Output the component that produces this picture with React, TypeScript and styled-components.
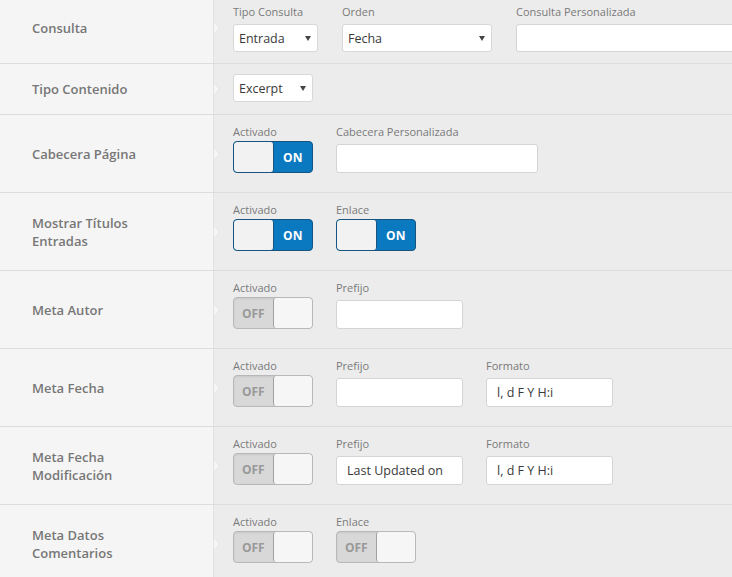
import styled, { createGlobalStyle, css } from 'styled-components';

const GlobalStyle = createGlobalStyle`
  html, body {
    margin: 0;
    padding: 0;
    background: #ececec;
    overflow: hidden;
  }
  * {
    box-sizing: border-box;
  }
`;

const StyledPage = styled.div`
  width: 732px;
  font-family: 'Open Sans', 'Liberation Sans', sans-serif;
  overflow: hidden;
`;

const StyledRow = styled.div<{ $height: number }>`
  display: flex;
  height: ${(p) => p.$height}px;
  border-bottom: 1px solid #dcdcdc;
`;

const StyledTitleCell = styled.div<{ $shift: number }>`
  position: relative;
  flex: 0 0 214px;
  display: flex;
  align-items: center;
  padding: 0 0 ${(p) => p.$shift}px 32px;
  background: #f5f5f5;
  border-right: 1px solid #e2e2e2;

  &::before {
    content: '';
    position: absolute;
    right: -7px;
    top: calc(50% - ${(p) => p.$shift / 2}px);
    margin-top: -7px;
    border-left: 6px solid #e4e4e4;
    border-top: 7px solid transparent;
    border-bottom: 7px solid transparent;
    z-index: 1;
  }

  &::after {
    content: '';
    position: absolute;
    right: -6px;
    top: calc(50% - ${(p) => p.$shift / 2}px);
    margin-top: -6px;
    border-left: 5px solid #f5f5f5;
    border-top: 6px solid transparent;
    border-bottom: 6px solid transparent;
    z-index: 2;
  }
`;

const StyledTitle = styled.div`
  width: 132px;
  font-size: 13px;
  font-weight: 600;
  line-height: 18px;
  color: #777;
`;

const StyledContent = styled.div<{ $top: number; $gap: number }>`
  flex: 1;
  display: flex;
  align-items: flex-start;
  gap: ${(p) => p.$gap}px;
  padding: ${(p) => p.$top}px 0 0 19px;
  background: #ececec;
  overflow: hidden;
  white-space: nowrap;
`;

const StyledField = styled.div`
  display: flex;
  flex-direction: column;
`;

const StyledLabel = styled.div`
  font-size: 11px;
  line-height: 15px;
  color: #7a7a7a;
  margin-bottom: 2px;
`;

const StyledSelect = styled.div<{ $width: number; $offset?: number }>`
  position: relative;
  width: ${(p) => p.$width}px;
  height: 28px;
  margin-top: ${(p) => p.$offset ?? 0}px;
  padding: 0 0 0 5px;
  display: flex;
  align-items: center;
  background: #fff;
  border: 1px solid #d8d8d8;
  border-radius: 3px;
  font-size: 12.5px;
  color: #3a3a3a;

  &::after {
    content: '';
    position: absolute;
    right: 6px;
    top: 11px;
    border-top: 5px solid #444;
    border-left: 3px solid transparent;
    border-right: 3px solid transparent;
  }
`;

const StyledInput = styled.input<{ $width: number; $height?: number }>`
  width: ${(p) => p.$width}px;
  height: ${(p) => p.$height ?? 29}px;
  margin: 3px 0 0;
  padding: 0 10px;
  background: #fff;
  border: 1px solid #d4d4d4;
  border-radius: 3px;
  font-family: 'Open Sans', 'Liberation Sans', sans-serif;
  font-size: 12.5px;
  color: #3a3a3a;
  outline: none;
`;

const StyledToggle = styled.div<{ $on: boolean }>`
  position: relative;
  display: flex;
  width: 80px;
  height: 32px;
  border-radius: 4px;
  overflow: hidden;
  font-size: 12px;
  font-weight: 700;
  ${(p) =>
    p.$on
      ? css`
          border: 1px solid #17547f;
          background: #0b79bf;
          color: #fff;
        `
      : css`
          border: 1px solid #b8b8b8;
          background: #d8d8d8;
          color: #999;
          box-shadow: inset 0 1px 2px rgba(0, 0, 0, 0.08);
        `}
`;

const StyledKnob = styled.div<{ $on: boolean }>`
  width: 40px;
  height: 100%;
  background: #f2f2f2;
  border-radius: 3px;
  ${(p) =>
    p.$on
      ? css`
          border-right: 1px solid #17547f;
        `
      : css`
          border-left: 1px solid #a0a0a0;
          background: #f6f6f6;
        `}
`;

const StyledToggleText = styled.div`
  width: 39px;
  display: flex;
  align-items: center;
  justify-content: center;
`;

const Toggle = ({ on }: { on: boolean }) => (
  <StyledToggle $on={on}>
    {on ? (
      <>
        <StyledKnob $on />
        <StyledToggleText>ON</StyledToggleText>
      </>
    ) : (
      <>
        <StyledToggleText>OFF</StyledToggleText>
        <StyledKnob $on={false} />
      </>
    )}
  </StyledToggle>
);

const Row = ({
  title,
  height,
  top,
  gap = 23,
  shift = 0,
  children,
}: {
  title: string;
  height: number;
  top: number;
  gap?: number;
  shift?: number;
  children: React.ReactNode;
}) => (
  <StyledRow $height={height}>
    <StyledTitleCell $shift={shift}>
      <StyledTitle>{title}</StyledTitle>
    </StyledTitleCell>
    <StyledContent $top={top} $gap={gap}>
      {children}
    </StyledContent>
  </StyledRow>
);

const ToggleField = ({ label, on }: { label: string; on: boolean }) => (
  <StyledField>
    <StyledLabel>{label}</StyledLabel>
    <Toggle on={on} />
  </StyledField>
);

const InputField = ({ label, value = '', width = 127 }: { label: string; value?: string; width?: number }) => (
  <StyledField>
    <StyledLabel>{label}</StyledLabel>
    <StyledInput $width={width} value={value} readOnly />
  </StyledField>
);

export default function App() {
  return (
    <>
      <GlobalStyle />
      <StyledPage>
        <Row title="Consulta" height={64} top={4} gap={24} shift={7}>
          <StyledField>
            <StyledLabel>Tipo Consulta</StyledLabel>
            <StyledSelect $width={85} $offset={3}>
              Entrada
            </StyledSelect>
          </StyledField>
          <StyledField>
            <StyledLabel>Orden</StyledLabel>
            <StyledSelect $width={150} $offset={3}>
              Fecha
            </StyledSelect>
          </StyledField>
          <StyledField>
            <StyledLabel>Consulta Personalizada</StyledLabel>
            <StyledInput $width={260} $height={28} value="" readOnly />
          </StyledField>
        </Row>

        <Row title="Tipo Contenido" height={51} top={10}>
          <StyledSelect $width={80}>Excerpt</StyledSelect>
        </Row>

        <Row title="Cabecera Página" height={78} top={9}>
          <ToggleField label="Activado" on />
          <InputField label="Cabecera Personalizada" width={202} />
        </Row>

        <Row title="Mostrar Títulos Entradas" height={78} top={9}>
          <ToggleField label="Activado" on />
          <ToggleField label="Enlace" on />
        </Row>

        <Row title="Meta Autor" height={78} top={9}>
          <ToggleField label="Activado" on={false} />
          <InputField label="Prefijo" />
        </Row>

        <Row title="Meta Fecha" height={78} top={9}>
          <ToggleField label="Activado" on={false} />
          <InputField label="Prefijo" />
          <InputField label="Formato" value="l, d F Y H:i" />
        </Row>

        <Row title="Meta Fecha Modificación" height={78} top={9}>
          <ToggleField label="Activado" on={false} />
          <InputField label="Prefijo" value="Last Updated on" />
          <InputField label="Formato" value="l, d F Y H:i" />
        </Row>

        <Row title="Meta Datos Comentarios" height={78} top={9}>
          <ToggleField label="Activado" on={false} />
          <ToggleField label="Enlace" on={false} />
        </Row>
      </StyledPage>
    </>
  );
}
